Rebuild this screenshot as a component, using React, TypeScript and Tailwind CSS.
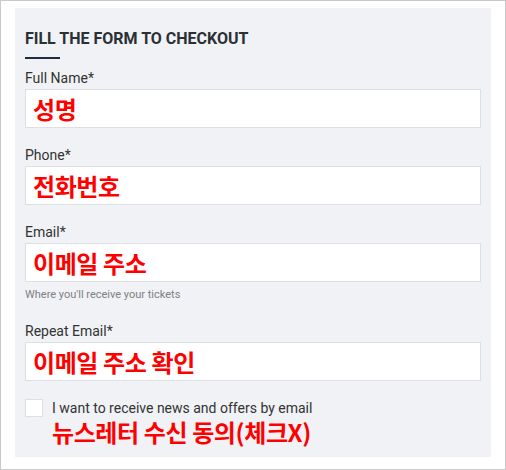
const fields = [
  { label: 'Full Name*', hint: '성명' },
  { label: 'Phone*', hint: '전화번호' },
  { label: 'Email*', hint: '이메일 주소', help: "Where you'll receive your tickets" },
  { label: 'Repeat Email*', hint: '이메일 주소 확인' },
];

const korean = "font-['Noto_Sans_CJK_KR',sans-serif] font-bold text-[#ff0000] text-[24px] leading-[26px] tracking-[-0.4px]";

export default function App() {
  return (
    <div className="w-[506px] h-[470px] bg-white border border-[#c9c9c9] font-['Roboto',sans-serif]">
      <div className="ml-[14px] mt-[7px] w-[476px] h-[449px] bg-[#f0f2f5] px-[10px] pt-[22px]">
        <h2 className="text-[16px] font-bold text-[#2b3035] leading-[18px]">FILL THE FORM TO CHECKOUT</h2>
        <div className="w-[35px] h-[2px] bg-[#1e2d3d] mt-[9px]" />
        <div className="mt-[11px] flex flex-col">
          {fields.map((f, i) => (
            <div key={f.label} className={i === 0 ? '' : f.label === 'Repeat Email*' ? 'mt-[22px]' : 'mt-[19px]'}>
              <label className="block text-[14px] leading-[16px] text-[#333]">{f.label}</label>
              <div className="mt-[3px] h-[39px] bg-white border border-[#dcdfe3] flex items-center px-[7px]">
                <span className={korean}>{f.hint}</span>
              </div>
              {f.help && <p className="mt-[6px] text-[11px] leading-[13px] text-[#808080]">{f.help}</p>}
            </div>
          ))}
        </div>
        <div className="mt-[18px] flex gap-[9px]">
          <div className="w-[18px] h-[18px] bg-white border border-[#dcdfe3] shrink-0" />
          <div className="pt-[1px]">
            <p className="text-[14px] leading-[16px] text-[#333]">I want to receive news and offers by email</p>
            <p className={korean + ' mt-[3px] tracking-[-0.2px]'}>뉴스레터 수신 동의(체크X)</p>
          </div>
        </div>
      </div>
    </div>
  );
}
